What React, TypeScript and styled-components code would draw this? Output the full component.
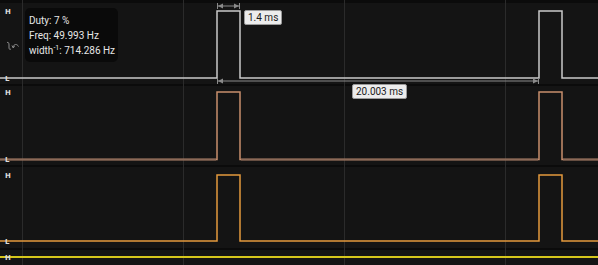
import { createGlobalStyle, styled } from 'styled-components';

const GlobalStyle = createGlobalStyle`
  html, body {
    margin: 0;
    padding: 0;
    background: #0c0c0c;
  }
  body {
    font-family: Roboto, 'Liberation Sans', sans-serif;
  }
`;

const W = 598;
const EDGES = [217, 240, 539, 562];

type LaneDef = {
  height: number;
  high: number;
  low: number;
  color: string;
  lowColor?: string;
  levelPad: [number, number];
};

const LANES: LaneDef[] = [
  { height: 81, high: 8, low: 75, color: '#c9c9c9', levelPad: [5, 1] },
  { height: 79, high: 6, low: 73.5, color: '#c88e6c', lowColor: '#8c6a58', levelPad: [3, 1] },
  { height: 81, high: 8, low: 74, color: '#e3993d', levelPad: [5, 2] },
];

function pulsePath(high: number, low: number) {
  const [a, b, c, d] = EDGES;
  return `M0 ${low} H${a} V${high} H${b} V${low} H${c} V${high} H${d} V${low} H${W}`;
}

function Waveform({ lane }: { lane: LaneDef }) {
  return (
    <WaveSvg viewBox={`0 0 ${W} ${lane.height}`} preserveAspectRatio="none">
      <path
        d={pulsePath(lane.high, lane.low)}
        fill="none"
        stroke={lane.color}
        strokeWidth={1.5}
      />
      {lane.lowColor && (
        <>
          <line x1={0} y1={lane.low} x2={EDGES[0] - 1} y2={lane.low} stroke={lane.lowColor} strokeWidth={2} />
          <line x1={EDGES[1] + 1} y1={lane.low} x2={EDGES[2] - 1} y2={lane.low} stroke={lane.lowColor} strokeWidth={2} />
          <line x1={EDGES[3] + 1} y1={lane.low} x2={W} y2={lane.low} stroke={lane.lowColor} strokeWidth={2} />
        </>
      )}
    </WaveSvg>
  );
}

function Arrow({ x1, x2, y }: { x1: number; x2: number; y: number }) {
  return (
    <g stroke="#8a8a8a" fill="#8a8a8a" strokeWidth={1}>
      <line x1={x1} y1={y} x2={x2} y2={y} />
      <line x1={x1 + 0.5} y1={y - 3} x2={x1 + 0.5} y2={y + 3} />
      <line x1={x2 - 0.5} y1={y - 3} x2={x2 - 0.5} y2={y + 3} />
      <path d={`M${x1 + 1} ${y} l5 -2.5 v5 z`} stroke="none" />
      <path d={`M${x2 - 1} ${y} l-5 -2.5 v5 z`} stroke="none" />
    </g>
  );
}

function EdgeIcon() {
  return (
    <svg viewBox="0 0 14 10" width={14} height={10}>
      <path
        d="M1 1.5 C2.5 1, 3 2, 3 4 V7 C3 8.5, 4 8.5, 5 8"
        fill="none"
        stroke="#8d8d8d"
        strokeWidth={1}
      />
      <path d="M7 6 C8 3, 11 2.5, 12.5 5.5" fill="none" stroke="#8d8d8d" strokeWidth={1} />
      <path d="M6 4.5 L7.2 7 L8.6 5.2" fill="none" stroke="#8d8d8d" strokeWidth={1} />
    </svg>
  );
}

function Levels({ pad, showLow = true }: { pad: [number, number]; showLow?: boolean }) {
  return (
    <LevelColumn $top={pad[0]} $bottom={pad[1]}>
      <Level>H</Level>
      {showLow && <Level>L</Level>}
    </LevelColumn>
  );
}

export default function App() {
  return (
    <>
      <GlobalStyle />
      <Scope>
        <Lane $height={LANES[0].height} $first>
          <Waveform lane={LANES[0]} />
          <OverlaySvg viewBox={`0 0 ${W} 90`} width={W} height={90}>
            <Arrow x1={217} x2={240} y={3} />
            <Arrow x1={217} x2={539} y={78} />
          </OverlaySvg>
          <Levels pad={LANES[0].levelPad} />
          <InfoRow>
            <EdgeIcon />
            <Tooltip>
              <span>Duty: 7 %</span>
              <span>Freq: 49.993 Hz</span>
              <span>
                width<sup>-1</sup>: 714.286 Hz
              </span>
            </Tooltip>
          </InfoRow>
          <MeasureLabel $left={244} $top={7}>1.4 ms</MeasureLabel>
          <MeasureLabel $left={352} $top={81}>20.003 ms</MeasureLabel>
        </Lane>
        <Lane $height={LANES[1].height}>
          <Waveform lane={LANES[1]} />
          <Levels pad={LANES[1].levelPad} />
        </Lane>
        <Lane $height={LANES[2].height}>
          <Waveform lane={LANES[2]} />
          <Levels pad={LANES[2].levelPad} />
        </Lane>
        <Lane $height={16}>
          <YellowLine />
          <Levels pad={[4, 0]} showLow={false} />
        </Lane>
      </Scope>
    </>
  );
}

const gridBg = `
  background-image: linear-gradient(to right, #2b2b2b 0 1px, transparent 1px);
  background-size: 161px 100%;
  background-position: 22px 0;
  background-repeat: repeat-x;
`;

const Scope = styled.div`
  display: flex;
  flex-direction: column;
  gap: 2px;
  width: 598px;
  height: 265px;
  overflow: hidden;
  box-sizing: border-box;
  padding-top: 3px;
  background-color: #0b0b0b;
  ${gridBg}
`;

const Lane = styled.div<{ $height: number; $first?: boolean }>`
  position: relative;
  flex: 0 0 ${(p) => p.$height}px;
  background-color: #141414;
  ${gridBg}
  z-index: ${(p) => (p.$first ? 2 : 1)};
`;

const WaveSvg = styled.svg`
  display: block;
  width: 100%;
  height: 100%;
`;

const OverlaySvg = styled.svg`
  position: absolute;
  left: 0;
  top: 0;
  overflow: visible;
  pointer-events: none;
`;

const YellowLine = styled.div`
  position: absolute;
  inset: 6px 0 auto 0;
  height: 2px;
  background: #d6c71c;
`;

const LevelColumn = styled.div<{ $top: number; $bottom: number }>`
  position: absolute;
  inset: 0 auto 0 5px;
  display: flex;
  flex-direction: column;
  justify-content: space-between;
  padding: ${(p) => p.$top}px 0 ${(p) => p.$bottom}px;
`;

const Level = styled.div`
  font-family: 'DejaVu Sans', sans-serif;
  font-size: 7px;
  font-weight: 700;
  line-height: 8px;
  color: #dcdcdc;
`;

const InfoRow = styled.div`
  position: absolute;
  left: 6px;
  top: 5px;
  display: flex;
  align-items: flex-start;
  gap: 5px;

  & > svg {
    margin-top: 33px;
  }
`;

const Tooltip = styled.div`
  width: 93px;
  height: 54px;
  box-sizing: border-box;
  padding: 5px 0 0 4px;
  display: flex;
  flex-direction: column;
  background: #0a0a0a;
  border-radius: 5px;
  font-size: 10px;
  line-height: 15px;
  color: #e6e6e6;
  white-space: nowrap;

  sup {
    font-size: 7px;
    line-height: 0;
    vertical-align: 4px;
  }
`;

const MeasureLabel = styled.div<{ $left: number; $top: number }>`
  position: absolute;
  left: ${(p) => p.$left}px;
  top: ${(p) => p.$top}px;
  padding: 0 3px;
  height: 13px;
  line-height: 13px;
  font-size: 10px;
  color: #1a1a1a;
  background: #ececec;
  border: 1px solid #9a9a9a;
  border-radius: 2px;
  white-space: nowrap;
`;
